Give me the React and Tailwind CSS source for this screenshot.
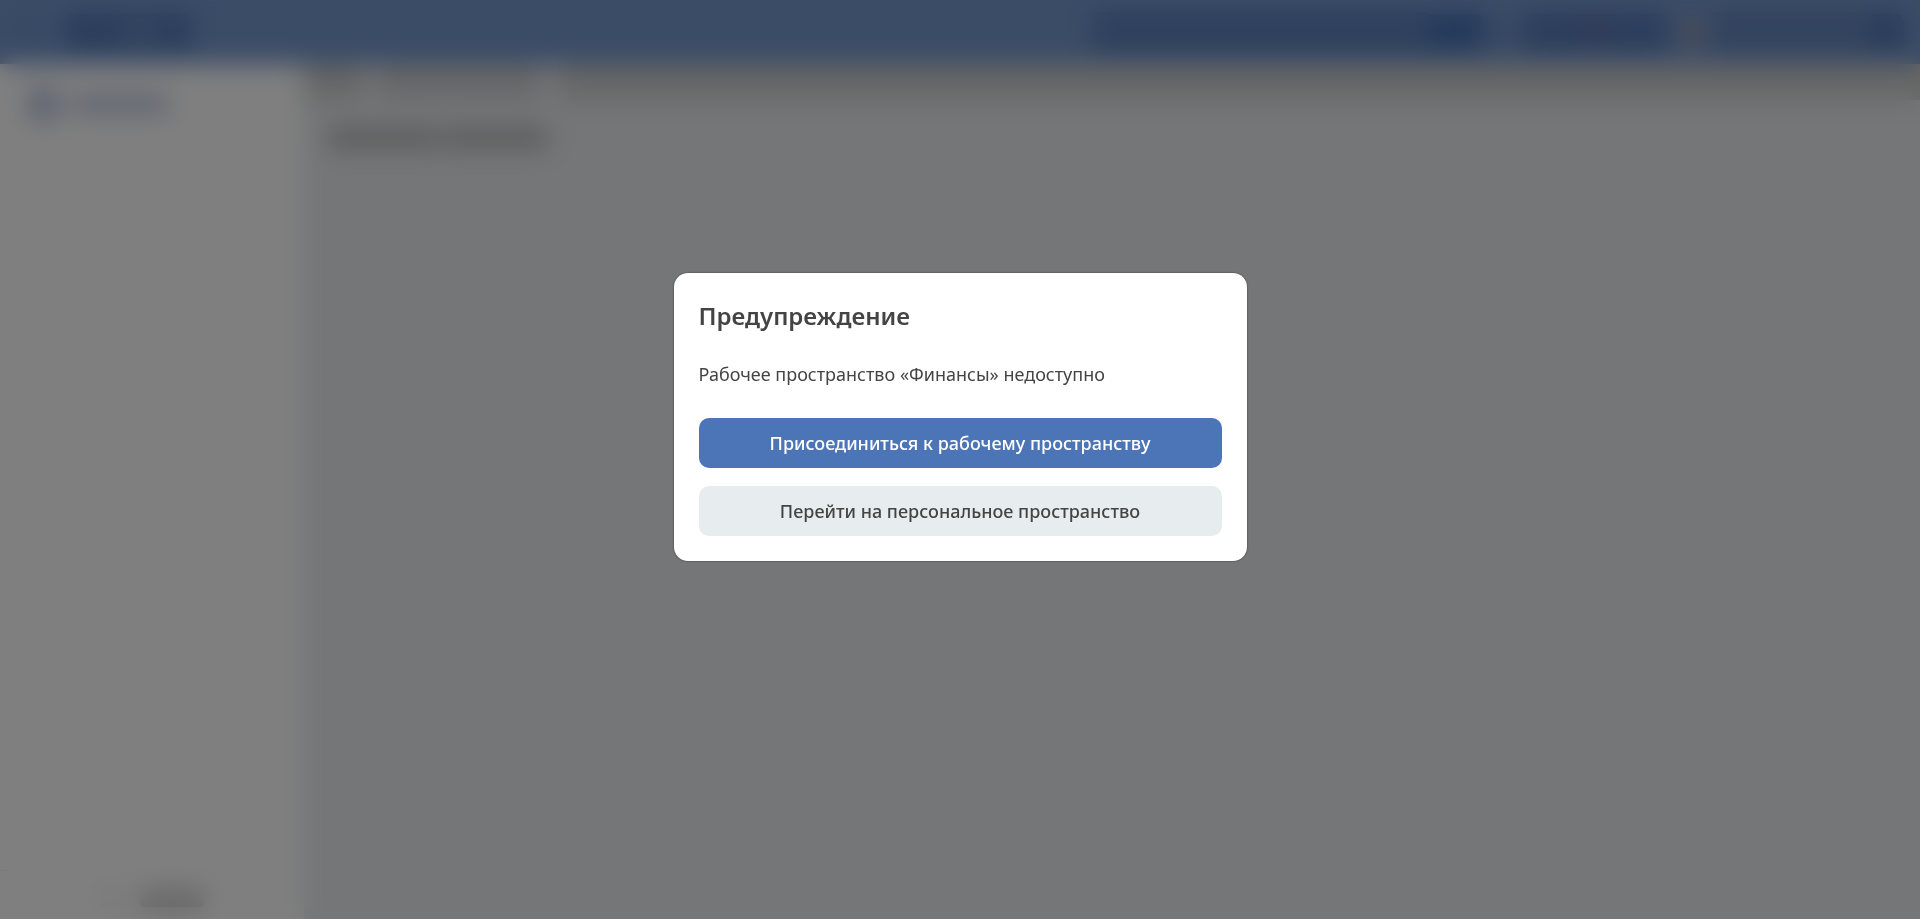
function Header() {
  return (
    <header className="flex h-16 shrink-0 items-center justify-between bg-[#7698ce] px-4">
      <div className="flex items-center gap-6">
        <div className="h-8 w-6 rounded bg-[#6c90c4]" />
        <div className="flex h-9 w-32 items-center justify-end rounded-lg bg-[#5479b6] pr-8">
          <div className="h-4 w-10 rounded bg-[#6c8ec2]" />
        </div>
      </div>
      <div className="flex items-center">
        <div className="h-10 w-84 rounded-l-lg bg-[#5d80bb]" />
        <div className="h-9 w-14 rounded-r-lg bg-[#4672b4]" />
        <div className="h-9 w-10 bg-[#7092c8]" />
        <div className="flex h-9 w-36 items-center justify-center rounded-lg bg-[#557ab8]">
          <div className="size-5 rounded-full bg-[#746fa0]" />
        </div>
        <div className="ml-3 size-6 rounded-full bg-[#9c98a0]" />
        <div className="ml-2 h-10 w-40 bg-[#6686bd]" />
        <div className="h-9 w-8 rounded-r-lg bg-[#5075b4]" />
      </div>
    </header>
  );
}

function Sidebar() {
  return (
    <aside className="flex w-76 shrink-0 flex-col justify-between bg-white">
      <div className="flex items-center gap-3 px-7 pt-6">
        <div className="size-8 rounded-lg bg-[#b8c4e0]" />
        <div className="h-5 w-24 rounded bg-[#c0cae2]" />
      </div>
      <div className="flex items-center justify-center gap-4 border-t border-[#eeeeee] pt-5 pb-3">
        <div className="h-4 w-6 rounded bg-[#efefef]" />
        <div className="h-4 w-16 rounded bg-[#c0c0c0]" />
      </div>
    </aside>
  );
}

function Workspace() {
  return (
    <main className="flex grow flex-col bg-[#e9ecf0]">
      <div className="flex h-9 bg-[#cdcecc]">
        <div className="w-14" />
        <div className="w-5 bg-[#e4e5e8]" />
        <div className="w-40 bg-[#d0d1d2]" />
        <div className="w-5 bg-[#e9ebee]" />
      </div>
      <div className="flex gap-1 px-6 pt-7">
        <div className="h-5 w-28 rounded bg-[#b4b5b3]" />
        <div className="h-5 w-26 rounded bg-[#b4b5b3]" />
      </div>
    </main>
  );
}

export default function App() {
  return (
    <div className="font-['Noto_Sans',sans-serif] text-[#444444]">
      <div className="flex h-screen flex-col" aria-hidden="true">
        <Header />
        <div className="flex grow">
          <Sidebar />
          <Workspace />
        </div>
      </div>
      <div className="fixed inset-0 flex items-start justify-center bg-black/50 px-4 pt-[273px] backdrop-blur-[13px]">
        <section
          role="dialog"
          aria-modal="true"
          aria-labelledby="dialog-title"
          className="flex w-full max-w-[573px] flex-col rounded-[14px] bg-white p-[25px] shadow-[0_0_2px_rgba(0,0,0,0.6)]"
        >
          <h1 id="dialog-title" className="text-2xl leading-9 font-semibold">
            Предупреждение
          </h1>
          <p className="mt-6 text-lg leading-8">Рабочее пространство «Финансы» недоступно</p>
          <div className="mt-7 flex flex-col gap-[18px]">
            <button type="button" className="h-[50px] rounded-[10px] bg-[#4b75b7] text-lg font-medium text-white">
              Присоединиться к рабочему пространству
            </button>
            <button type="button" className="h-[50px] rounded-[10px] bg-[#e7ecef] text-lg font-medium">
              Перейти на персональное пространство
            </button>
          </div>
        </section>
      </div>
    </div>
  );
}
